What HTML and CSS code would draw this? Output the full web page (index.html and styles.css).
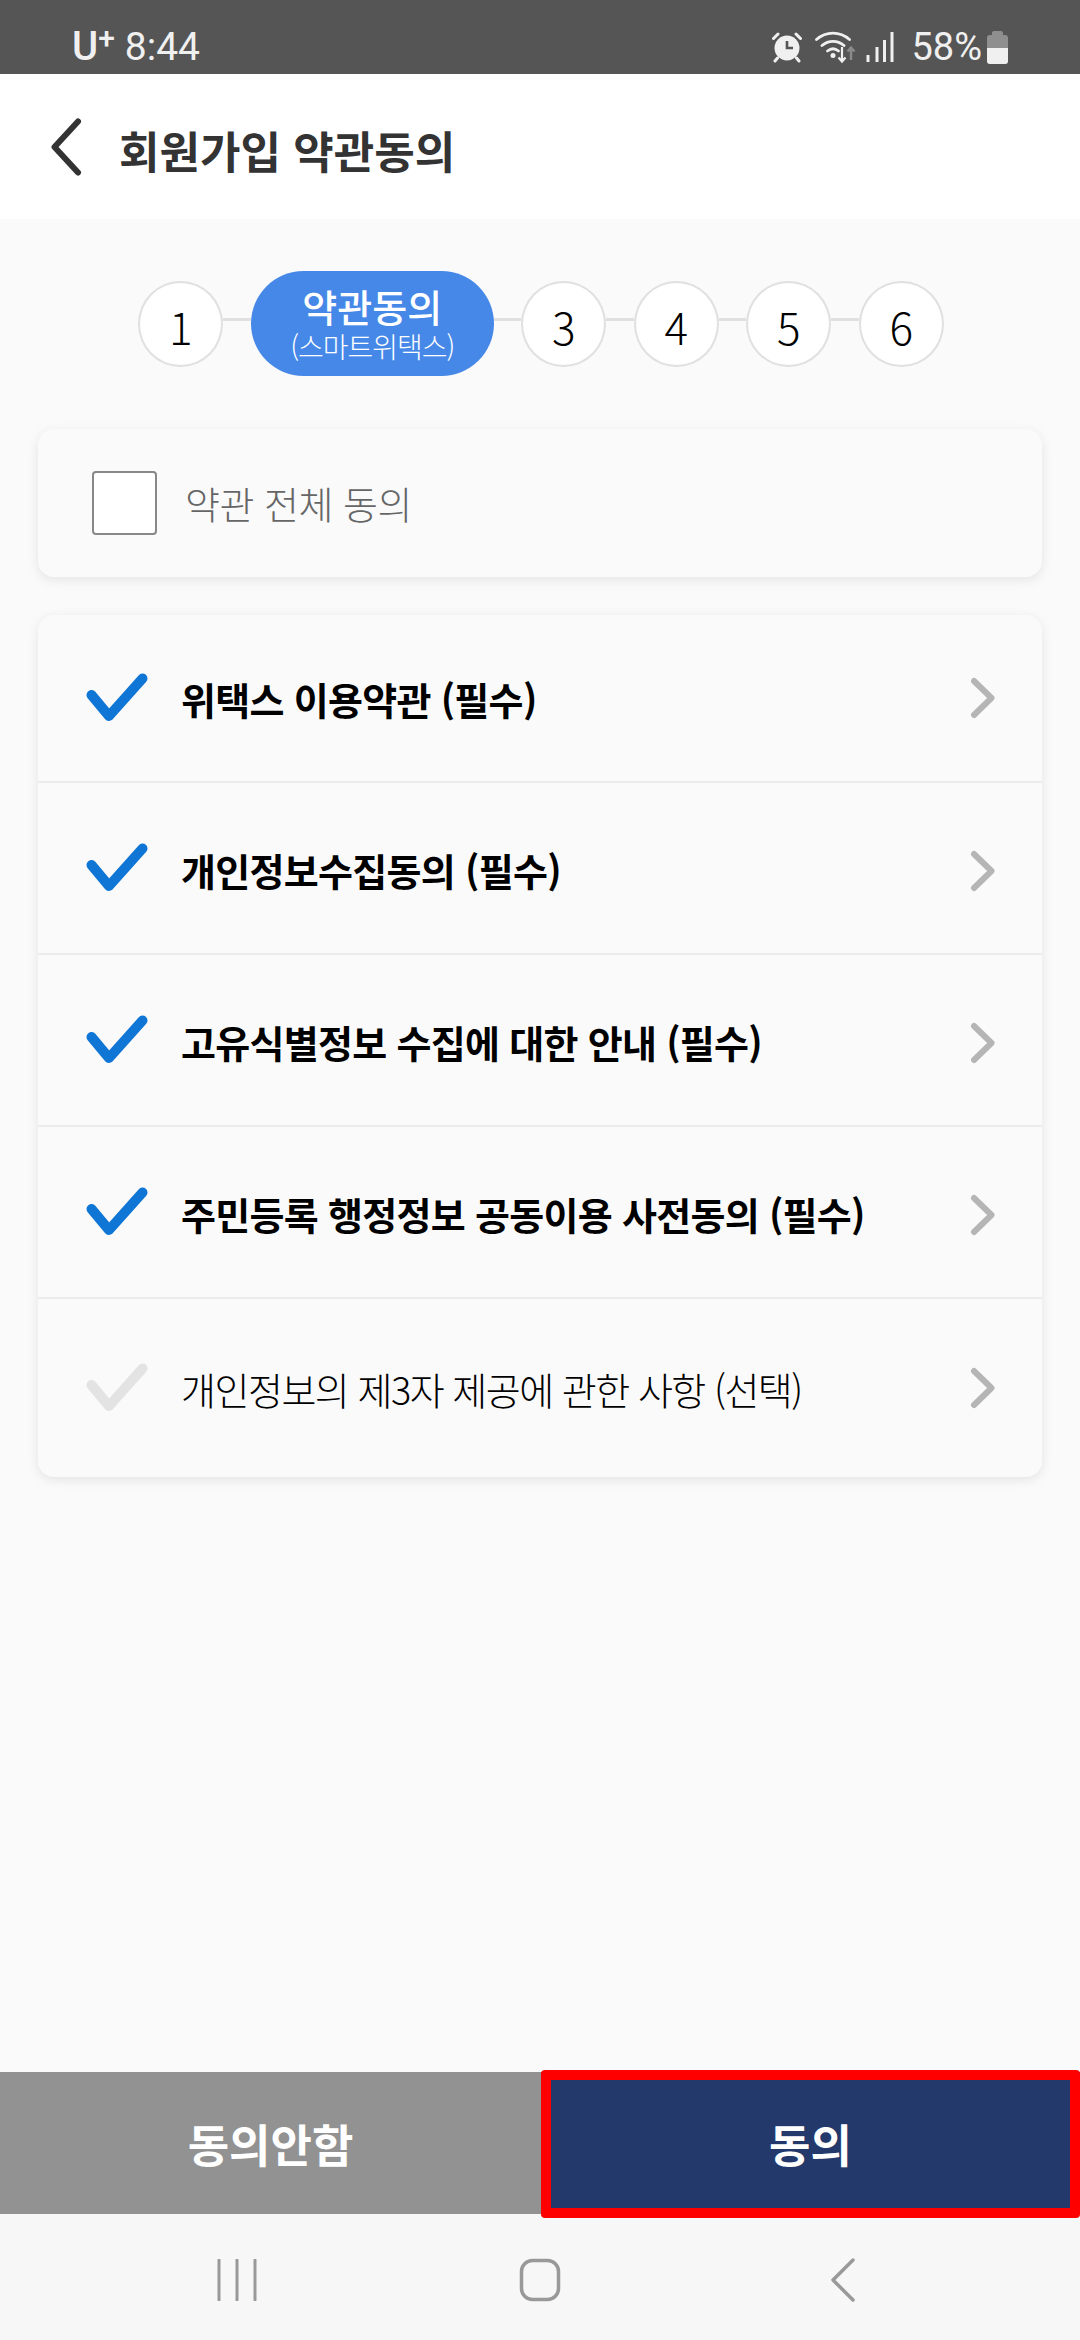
FILE: index.html
```html
<!DOCTYPE html>
<html lang="ko">
<head>
  <meta charset="UTF-8">
  <title>회원가입 약관동의</title>
  <link rel="stylesheet" href="styles.css">
</head>
<body>
  <div class="app">

    <!-- Status bar -->
    <div class="status-bar">
      <div class="status-left">
        <span class="carrier">U<sup>+</sup></span>
        <span class="clock">8:44</span>
      </div>
      <div class="status-right">
        <svg class="icon-alarm" width="32" height="32" viewBox="0 0 32 32">
          <circle cx="16" cy="17" r="12.500" fill="#f0f0f0"/>
          <path d="M16 10v7h6" fill="none" stroke="#555" stroke-width="2.600"/>
          <path d="M2.500 7.500 7 3M29.500 7.500 25 3M6.500 27l-2.500 3M25.500 27l2.500 3" fill="none" stroke="#f0f0f0" stroke-width="3" stroke-linecap="round"/>
        </svg>
        <svg class="icon-wifi" width="44" height="34" viewBox="0 0 44 34">
          <path d="M1.500 9.500C11 1 25 1 34.500 9.500M7 15.500c6.500-5.500 15.500-5.500 22 0M12.500 21c3.500-2.800 7.500-2.800 11 0" fill="none" stroke="#f0f0f0" stroke-width="2.800" stroke-linecap="round"/>
          <circle cx="18" cy="25.500" r="2.500" fill="#f0f0f0"/>
          <path d="M27 17v14M23.500 27.500 27 31.500l3.500-4" fill="none" stroke="#f0f0f0" stroke-width="2.200"/>
          <path d="M36 30V18M32.500 21.500 36 17.500l3.500 4" fill="none" stroke="#8a8a8a" stroke-width="2.400"/>
        </svg>
        <svg class="icon-signal" width="28" height="30" viewBox="0 0 28 30">
          <path d="M2 23v7M11 15v15M18.500 8v22M26 0v30" fill="none" stroke="#f0f0f0" stroke-width="3"/>
        </svg>
        <span class="battery-text">58%</span>
        <div class="battery">
          <div class="battery-cap"></div>
          <div class="battery-body"><div class="battery-level"></div></div>
        </div>
      </div>
    </div>

    <!-- Header -->
    <div class="header">
      <svg class="back" width="32" height="58" viewBox="0 0 32 58">
        <path d="M28 3.500 4.500 29 28 54.500" fill="none" stroke="#333" stroke-width="6" stroke-linecap="round" stroke-linejoin="round"/>
      </svg>
      <h1>회원가입 약관동의</h1>
    </div>

    <div class="content">

      <!-- Steps -->
      <div class="steps">
        <div class="step">1</div>
        <div class="step-line"></div>
        <div class="step-active">
          <div class="step-title">약관동의</div>
          <div class="step-sub">(스마트위택스)</div>
        </div>
        <div class="step-line"></div>
        <div class="step">3</div>
        <div class="step-line"></div>
        <div class="step">4</div>
        <div class="step-line"></div>
        <div class="step">5</div>
        <div class="step-line"></div>
        <div class="step">6</div>
      </div>

      <!-- Agree all -->
      <div class="card card-all">
        <div class="checkbox"></div>
        <span class="all-label">약관 전체 동의</span>
      </div>

      <!-- Terms -->
      <div class="card card-terms">
        <div class="term">
          <svg class="check" width="62" height="50" viewBox="0 0 62 50"><path d="M5.500 22 23 43 56.500 5.500" fill="none" stroke="#0f76d6" stroke-width="10" stroke-linecap="round" stroke-linejoin="round"/></svg>
          <span class="term-label">위택스 이용약관 (필수)</span>
          <svg class="arrow" width="26" height="42" viewBox="0 0 26 42"><path d="M4 4 21.500 21 4 38" fill="none" stroke="#b5b5b5" stroke-width="6" stroke-linecap="round" stroke-linejoin="round"/></svg>
        </div>
        <div class="term term-mid">
          <svg class="check" width="62" height="50" viewBox="0 0 62 50"><path d="M5.500 22 23 43 56.500 5.500" fill="none" stroke="#0f76d6" stroke-width="10" stroke-linecap="round" stroke-linejoin="round"/></svg>
          <span class="term-label">개인정보수집동의 (필수)</span>
          <svg class="arrow" width="26" height="42" viewBox="0 0 26 42"><path d="M4 4 21.500 21 4 38" fill="none" stroke="#b5b5b5" stroke-width="6" stroke-linecap="round" stroke-linejoin="round"/></svg>
        </div>
        <div class="term term-mid">
          <svg class="check" width="62" height="50" viewBox="0 0 62 50"><path d="M5.500 22 23 43 56.500 5.500" fill="none" stroke="#0f76d6" stroke-width="10" stroke-linecap="round" stroke-linejoin="round"/></svg>
          <span class="term-label">고유식별정보 수집에 대한 안내 (필수)</span>
          <svg class="arrow" width="26" height="42" viewBox="0 0 26 42"><path d="M4 4 21.500 21 4 38" fill="none" stroke="#b5b5b5" stroke-width="6" stroke-linecap="round" stroke-linejoin="round"/></svg>
        </div>
        <div class="term term-mid">
          <svg class="check" width="62" height="50" viewBox="0 0 62 50"><path d="M5.500 22 23 43 56.500 5.500" fill="none" stroke="#0f76d6" stroke-width="10" stroke-linecap="round" stroke-linejoin="round"/></svg>
          <span class="term-label">주민등록 행정정보 공동이용 사전동의 (필수)</span>
          <svg class="arrow" width="26" height="42" viewBox="0 0 26 42"><path d="M4 4 21.500 21 4 38" fill="none" stroke="#b5b5b5" stroke-width="6" stroke-linecap="round" stroke-linejoin="round"/></svg>
        </div>
        <div class="term term-off">
          <svg class="check" width="62" height="50" viewBox="0 0 62 50"><path d="M5.500 22 23 43 56.500 5.500" fill="none" stroke="#e3e3e3" stroke-width="10" stroke-linecap="round" stroke-linejoin="round"/></svg>
          <span class="term-label">개인정보의 제3자 제공에 관한 사항 (선택)</span>
          <svg class="arrow" width="26" height="42" viewBox="0 0 26 42"><path d="M4 4 21.500 21 4 38" fill="none" stroke="#b5b5b5" stroke-width="6" stroke-linecap="round" stroke-linejoin="round"/></svg>
        </div>
      </div>
    </div>

    <!-- Buttons -->
    <div class="actions">
      <button class="btn btn-no">동의안함</button>
      <button class="btn btn-yes">동의</button>
    </div>

    <!-- Android nav -->
    <div class="nav-bar">
      <svg width="40" height="42" viewBox="0 0 40 42"><path d="M2 1v40M20 1v40M38 1v40" fill="none" stroke="#999" stroke-width="3" stroke-linecap="round"/></svg>
      <svg class="nav-home" width="42" height="44" viewBox="0 0 42 44"><rect x="2.500" y="2.500" width="37" height="39" rx="11" fill="none" stroke="#999" stroke-width="3.500"/></svg>
      <svg width="26" height="44" viewBox="0 0 26 44"><path d="M23 2 3 22l20 20" fill="none" stroke="#999" stroke-width="3.500" stroke-linecap="round" stroke-linejoin="round"/></svg>
    </div>
  </div>
</body>
</html>
```

FILE: styles.css
```css
* {
  box-sizing: border-box;
}

body {
  margin: 0;
  font-family: "Noto Sans CJK KR", "Noto Sans", sans-serif;
  background: #fafafa;
}

.app {
  width: 1080px;
  height: 2340px;
  display: flex;
  flex-direction: column;
  overflow: hidden;
}

/* status bar */
.status-bar {
  height: 74px;
  flex: none;
  background: #555;
  color: #f0f0f0;
  font-family: Roboto, sans-serif;
  font-size: 39px;
  display: flex;
  justify-content: space-between;
  align-items: flex-end;
  padding: 0 72px 5px 72px;
}

.status-left,
.status-right {
  display: flex;
  align-items: center;
}

.carrier {
  font-weight: 500;
  font-size: 40px;
  margin-right: 10px;
  line-height: 44px;
}

.carrier sup {
  font-size: 30px;
  line-height: 0;
  vertical-align: 12px;
}

.clock {
  line-height: 44px;
}

.icon-alarm {
  margin-right: 12px;
}

.icon-wifi {
  margin-right: 7px;
}

.icon-signal {
  margin-right: 17px;
}

.battery-text {
  line-height: 44px;
  font-size: 38px;
  margin-right: 5px;
}

.battery {
  width: 21px;
  display: flex;
  flex-direction: column;
  align-items: center;
}

.battery-cap {
  width: 11px;
  height: 4px;
  background: #8f8f8f;
  border-radius: 2px 2px 0 0;
}

.battery-body {
  width: 21px;
  height: 29px;
  background: #8f8f8f;
  border-radius: 3px;
  display: flex;
  align-items: flex-end;
  overflow: hidden;
}

.battery-level {
  width: 100%;
  height: 16px;
  background: #f0f0f0;
}

/* header */
.header {
  height: 145px;
  flex: none;
  background: #fff;
  display: flex;
  align-items: center;
  padding-left: 50px;
}

.back {
  margin-right: 37px;
}

h1 {
  margin: 6px 0 0;
  font-size: 44px;
  font-weight: 700;
  color: #333;
}

.content {
  flex: 1;
  padding: 52px 38px 0;
}

/* steps */
.steps {
  display: flex;
  align-items: center;
  justify-content: center;
  height: 105px;
  padding-left: 2px;
}

.step {
  width: 85px;
  height: 86px;
  flex: none;
  border: 2px solid #e0e0e0;
  border-radius: 50%;
  background: #fff;
  color: #000;
  font-size: 44px;
  font-weight: 300;
  line-height: 86px;
  text-align: center;
}

.step-line {
  width: 27.500px;
  height: 3px;
  flex: none;
  margin-bottom: 8px;
  background: #e0e0e0;
}

.step-active {
  width: 243px;
  height: 105px;
  flex: none;
  background: #4688e8;
  border-radius: 53px;
  color: #fff;
  text-align: center;
  padding-top: 13px;
}

.step-title {
  font-size: 38px;
  font-weight: 500;
  line-height: 44px;
}

.step-sub {
  font-size: 28px;
  font-weight: 300;
  line-height: 36px;
  letter-spacing: -1px;
}

/* cards */
.card {
  background: #fafafa;
  border-radius: 16px;
  box-shadow: 0 3px 12px rgba(0,0,0,0.09);
}

.card-all {
  height: 148px;
  margin-top: 53px;
  display: flex;
  align-items: center;
  padding-left: 54px;
}

.checkbox {
  width: 65px;
  height: 64px;
  background: #fff;
  border: 2px solid #888;
  border-radius: 4px;
  margin-right: 28px;
}

.all-label {
  font-size: 38px;
  font-weight: 300;
  letter-spacing: -0.5px;
  color: #666;
  margin-bottom: 2px;
}

.card-terms {
  margin-top: 38px;
}

.term {
  height: 172px;
  display: flex;
  align-items: center;
  padding: 0 46px 0 48px;
  border-bottom: 2px solid #ececec;
}

.term:first-child {
  height: 168px;
}

.term:last-child {
  height: 178px;
  border-bottom: none;
}

.check {
  margin-right: 33px;
  flex: none;
}

.term-label {
  flex: 1;
  font-size: 38px;
  font-weight: 700;
  letter-spacing: -0.7px;
  color: #000;
}

.term-off .term-label {
  font-weight: 300;
  letter-spacing: -1.5px;
}

.term-mid .term-label {
  margin-top: 3px;
}

.term-mid .arrow {
  margin-top: 5px;
}

/* bottom buttons */
.actions {
  display: flex;
  height: 142px;
  flex: none;
}

.btn {
  border: none;
  color: #fff;
  font-family: inherit;
  font-size: 45px;
  font-weight: 700;
  padding: 0;
}

.btn-no {
  width: 541px;
  background: #929292;
}

.btn-yes {
  flex: 1;
  background: #23386b;
  position: relative;
}

/* red highlight drawn over the button */
.btn-yes::after {
  content: "";
  position: absolute;
  top: -2px;
  right: 0;
  bottom: -4px;
  left: 0;
  border: 10px solid #f00;
  border-radius: 4px;
}

/* nav bar */
.nav-bar {
  height: 126px;
  flex: none;
  background: #f7f7f7;
  display: flex;
  align-items: center;
  padding: 6px 224px 0 217px;
  justify-content: space-between;
}

.nav-home {
  margin-right: 8px;
}
```
